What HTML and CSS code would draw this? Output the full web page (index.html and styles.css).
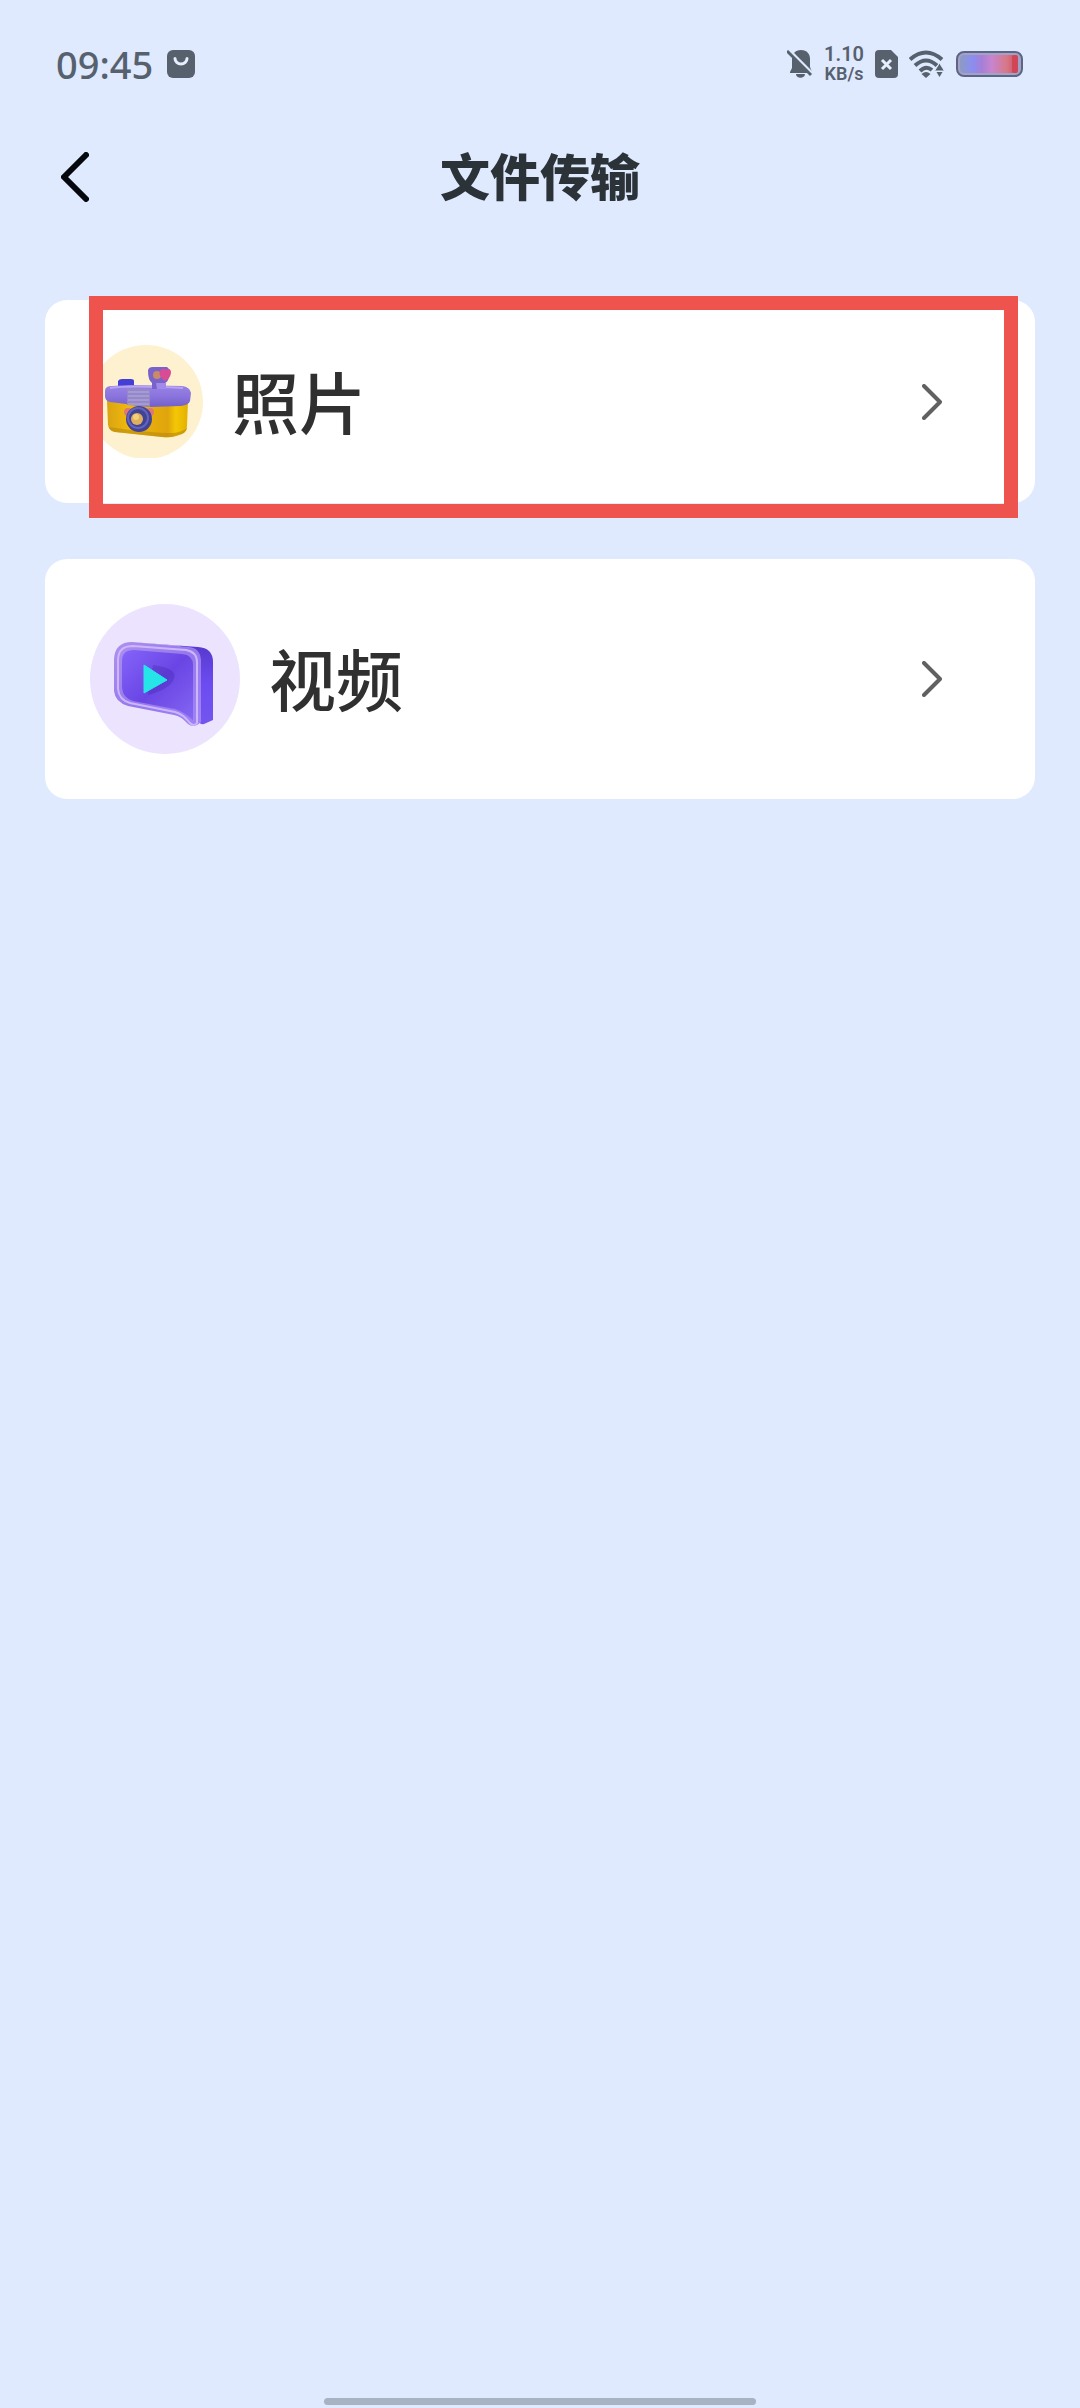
FILE: index.html
```html
<!DOCTYPE html>
<html lang="zh-CN">
<head>
<meta charset="utf-8">
<meta name="viewport" content="width=device-width, initial-scale=1">
<title>文件传输</title>
<link rel="stylesheet" href="styles.css">
</head>
<body>

<div class="statusbar">
  <span class="clock">09:45</span>
  <svg class="bag" width="28" height="28" viewBox="0 0 28 28">
    <rect width="28" height="28" rx="6" fill="#57616d"/>
    <path d="M8 8.500a6 5.500 0 0 0 12 0" fill="none" stroke="#e6eeff" stroke-width="3" stroke-linecap="round"/>
  </svg>
  <div class="indicators">
    <svg class="bell" width="26" height="28" viewBox="0 0 26 28">
      <path d="M14 0c6 0 9 4 9 9v8l2 5v1H3v-1l2-4V9c0-5 3-9 9-9z" fill="#57616d"/>
      <path d="M9 24h9c0 5-9 5-9 0z" fill="#57616d"/>
      <path d="M2 0l24 24" stroke="#dfeaff" stroke-width="3"/>
      <path d="M0 1l24 24" stroke="#57616d" stroke-width="3"/>
    </svg>
    <div class="netspeed"><span class="rate">1.10</span><span class="unit">KB/s</span></div>
    <svg class="sim" width="23" height="28" viewBox="0 0 23 28">
      <path d="M4 0h12l7 7v17q0 4-4 4H4q-4 0-4-4V4q0-4 4-4z" fill="#57616d"/>
      <path d="M7 10l9 9M16 10l-9 9" stroke="#e6eeff" stroke-width="3"/>
    </svg>
    <svg class="wifi" width="36" height="28" viewBox="0 0 36 28">
      <g fill="none" stroke="#57616d" stroke-width="4">
        <path d="M1 9.500Q17-4.500 33 9.500"/>
        <path d="M6 15.500Q17 5.500 28 15.500"/>
        <path d="M11 21Q17 15 23 20"/>
      </g>
      <path d="M12.500 24q4.500-4 9 0L17 28z" fill="#57616d"/>
      <path d="M30.500 13l5 8h-10z" fill="#57616d" stroke="#dfeaff"/>
      <path d="M27.500 22h6l-3 5z" fill="#57616d"/>
    </svg>
    <svg class="battery" width="67" height="26" viewBox="0 0 67 26">
      <defs>
        <linearGradient id="charge">
          <stop offset="0" stop-color="#8c9bc4"/>
          <stop offset=".22" stop-color="#8b8df0"/>
          <stop offset=".38" stop-color="#a67fd6"/>
          <stop offset=".55" stop-color="#c884cf"/>
          <stop offset=".8" stop-color="#d77888"/>
          <stop offset="1" stop-color="#cf4d60"/>
        </linearGradient>
      </defs>
      <rect x="1" y="1" width="65" height="24" rx="7" fill="#a3a2c4" stroke="#5b6585" stroke-width="2"/>
      <rect x="4" y="4" width="58" height="18" rx="4" fill="url(#charge)"/>
      <rect x="56" y="4" width="6" height="18" rx="2" fill="#cf4659"/>
    </svg>
  </div>
</div>

<header class="titlebar">
  <button class="back" type="button" aria-label="返回">
    <svg width="28" height="50" viewBox="0 0 28 50">
      <path d="M25 3L3 25l22 22" fill="none" stroke="#05080c" stroke-width="6" stroke-linecap="round" stroke-linejoin="round"/>
    </svg>
  </button>
  <h1>文件传输</h1>
</header>

<main class="cards">
  <a class="card photo" href="#photo">
    <svg class="icon" viewBox="0 0 113 113">
      <defs>
        <linearGradient id="gold" x1="0" y1="0" x2="1" y2="0">
          <stop offset="0" stop-color="#d9a313"/>
          <stop offset=".25" stop-color="#efb80c"/>
          <stop offset=".75" stop-color="#e0a50c"/>
          <stop offset=".85" stop-color="#f4c705"/>
          <stop offset="1" stop-color="#e3b000"/>
        </linearGradient>
        <linearGradient id="lid" x1="0" y1="0" x2="0" y2="1">
          <stop offset="0" stop-color="#9a83e6"/>
          <stop offset=".5" stop-color="#8b74dc"/>
          <stop offset="1" stop-color="#7460cb"/>
        </linearGradient>
      </defs>
      <circle cx="56" cy="57" r="57" fill="#fdf1d0"/>
      <path d="M17 56L18 80Q19 86 25 87L72 92Q80 93 86 91L92 89Q97 87 97 81L98 56z" fill="url(#gold)"/>
      <path d="M19 82Q20 86 25 87L72 92Q80 93 86 91L92 89Q96 87 97 83Q92 87 84 88Q60 88 19 82z" fill="#b9890d" opacity=".6"/>
      <path d="M28 36q1-2 4-2h9q3 0 3 2v7H28z" fill="#433fd6"/>
      <path d="M15 46Q15 41 22 41L40 40L92 41Q100 42 101 48L100 56Q99 60 91 61L60 62L20 57Q15 56 15 51z" fill="url(#lid)"/>
      <path d="M20 43Q40 40 93 43" fill="none" stroke="#b7a4f2" stroke-width="2"/>
      <path d="M37 43L60 44V62L37 60z" fill="#9588c9"/>
      <path d="M38 47h21M38 51h21M38 55h21M38 59h21" stroke="#b5acdb"/>
      <path d="M58 26Q58 22 63 22H77Q81 24 79 32Q78 37 75 38V44H62V38Q58 35 58 26z" fill="#7962ca"/>
      <path d="M66 38h10v6h-9z" fill="#a28aeb"/>
      <circle cx="67" cy="30" r="4" fill="#c88b68"/>
      <path d="M75 36q-7-5-5-10 3-4 6-1 5-3 5 3-1 6-6 8z" fill="#d84c96"/>
      <circle cx="38" cy="67" r="4" fill="#de7775"/>
      <circle cx="60" cy="67" r="4" fill="#de7775"/>
      <circle cx="49" cy="74" r="13" fill="#434395"/>
      <circle cx="48" cy="73" r="10" fill="none" stroke="#6463bd" stroke-width="2"/>
      <circle cx="47" cy="74" r="6" fill="#deb05d"/>
      <circle cx="46" cy="72" r="3" fill="#f4cf7a"/>
    </svg>
    <span class="label">照片</span>
    <svg class="chevron" width="20" height="36" viewBox="0 0 20 36">
      <path d="M2 2l16 16L2 34" fill="none" stroke="#616161" stroke-width="4" stroke-linecap="round" stroke-linejoin="round"/>
    </svg>
    <span class="highlight"></span>
  </a>

  <a class="card video" href="#video">
    <svg class="icon" viewBox="0 0 150 150">
      <defs>
        <linearGradient id="side" x1="0" y1="0" x2="0" y2="1">
          <stop offset="0" stop-color="#5537c9"/>
          <stop offset=".5" stop-color="#6c4cf1"/>
          <stop offset="1" stop-color="#7355ee"/>
        </linearGradient>
        <linearGradient id="rim" x1="0" y1="0" x2="1" y2="1">
          <stop offset="0" stop-color="#ae91ed"/>
          <stop offset=".5" stop-color="#9678ed"/>
          <stop offset="1" stop-color="#a083f5"/>
        </linearGradient>
        <linearGradient id="face" x1="0" y1="0" x2="1" y2="1">
          <stop offset="0" stop-color="#8464fa"/>
          <stop offset=".5" stop-color="#6a45e4"/>
          <stop offset="1" stop-color="#8467f3"/>
        </linearGradient>
      </defs>
      <circle cx="75" cy="75" r="75" fill="#ece3fe"/>
      <path d="M40 38L108 43Q123 44 123 58V116L114 120Q110 121 109 117L90 42z" fill="url(#side)"/>
      <path d="M42 38L99 43Q110 44 111 56V118Q104 125 98 120Q91 112 84 111L38 102Q25 98 24 87V55Q25 38 42 38z" fill="url(#rim)"/>
      <path d="M43 42L96 46Q107 48 107 58V119Q104 123 100 119Q93 110 85 108L40 99Q29 96 28 85V56Q28 42 43 42z" fill="none" stroke="#cbb6ff" stroke-width="2"/>
      <path d="M44 46L92 50Q103 51 103 61V116Q94 108 85 105L43 97Q33 94 32 84V57Q32 46 44 46z" fill="url(#face)"/>
      <path d="M63 61Q88 64 84 75Q80 85 58 91z" fill="#3b22a6" opacity=".3"/>
      <path d="M54 61L77 76L54 89z" fill="#26e5e8" stroke="#26e5e8" stroke-linejoin="round"/>
    </svg>
    <span class="label">视频</span>
    <svg class="chevron" width="20" height="36" viewBox="0 0 20 36">
      <path d="M2 2l16 16L2 34" fill="none" stroke="#616161" stroke-width="4" stroke-linecap="round" stroke-linejoin="round"/>
    </svg>
  </a>
</main>

<div class="homebar"></div>

</body>
</html>
```

FILE: styles.css
```css
* { box-sizing: border-box; }

body {
  margin: 0;
  min-height: 100vh;
  display: flex;
  flex-direction: column;
  background: #dfeaff;
  color: #303030;
  font-family: "Noto Sans", "Noto Sans CJK SC", sans-serif;
}

svg { display: block; flex: none; }

.statusbar { display: flex; align-items: center; height: 128px; padding: 0 57px 0 56px; color: #57616d; }
.clock { font-size: 38px; font-weight: 500; line-height: 38px; }
.bag { margin-left: 14px; }

.indicators { display: flex; align-items: center; gap: 11px; margin-left: auto; }
.netspeed { display: flex; flex-direction: column; align-items: center; font-family: Roboto, sans-serif; font-weight: 600; }
.netspeed .rate { font-size: 20px; line-height: 20px; }
.netspeed .unit { font-size: 18px; line-height: 20px; }

.titlebar { position: relative; display: flex; align-items: center; justify-content: center; height: 92px; }
.titlebar h1 { margin: 0; font-family: "Noto Sans CJK SC", sans-serif; font-size: 50px; line-height: 50px; font-weight: 900; color: #2b3238; }
.back { position: absolute; left: 47px; top: 10px; padding: 14px; border: 0; background: none; cursor: pointer; }

.cards { display: flex; flex-direction: column; gap: 56px; padding: 80px 45px 0; }
.card {
  position: relative;
  display: flex;
  align-items: center;
  gap: 29px;
  padding: 45px 93px 45px 45px;
  border-radius: 22px;
  background: #fff;
  color: inherit;
  text-decoration: none;
}
.icon { width: 150px; height: 150px; }
.photo .icon { width: 113px; height: 113px; }
.label { padding-bottom: 4px; font-family: "Noto Sans CJK SC", sans-serif; font-size: 67px; line-height: 72px; font-weight: 500; }
.chevron { margin-left: auto; }

/* frame drawn over the photo card */
.highlight { position: absolute; left: 44px; right: 17px; top: -4px; bottom: -15px; border: 14px solid #ef534d; pointer-events: none; }

.homebar { width: 40%; height: 7px; margin: auto auto 3px; border-radius: 4px; background: #a7b3c2; }
```
